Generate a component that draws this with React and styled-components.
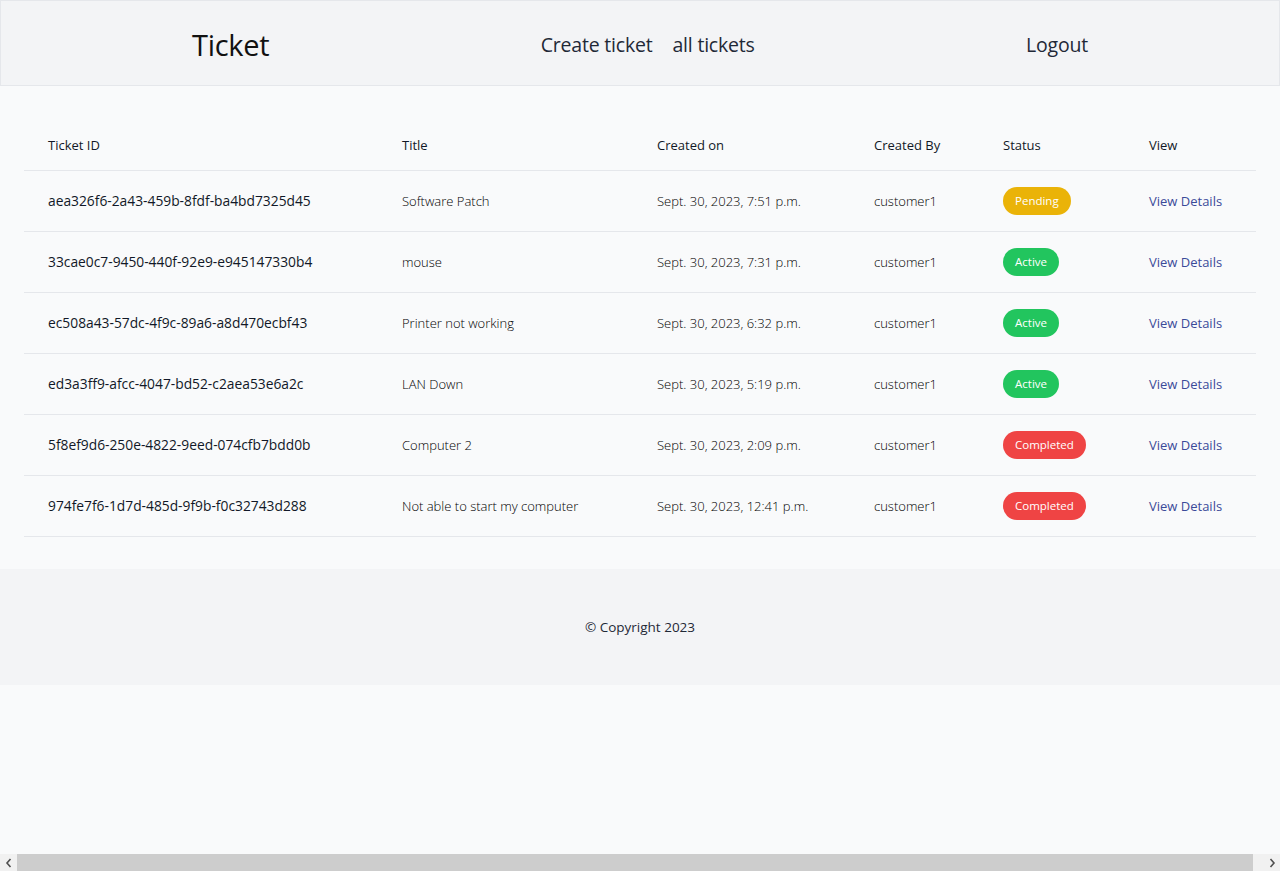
import styled, { createGlobalStyle } from "styled-components";

const Global = createGlobalStyle`
  html, body {
    margin: 0;
    padding: 0;
    background: #f9fafb;
    font-family: "Open Sans", "Noto Sans", sans-serif;
    color: #111827;
  }
`;

const Page = styled.div`
  min-height: 871px;
  background: #f9fafb;
`;

const Header = styled.header`
  background: #f3f4f6;
  border: 1px solid #e5e7eb;
  box-sizing: border-box;
  height: 86px;
  padding-top: 3px;
  display: flex;
  align-items: center;
`;

const HeaderInner = styled.div`
  width: 896px;
  margin: 0 auto;
  display: flex;
  justify-content: space-between;
  align-items: center;
`;

const Brand = styled.div`
  font-size: 29px;
  color: #111;
  letter-spacing: -0.3px;
`;

const Nav = styled.nav`
  display: flex;
  gap: 20px;
`;

const NavLink = styled.a`
  font-size: 19.5px;
  color: #1f2937;
  text-decoration: none;
  letter-spacing: -0.2px;
`;

const Main = styled.main`
  padding: 32px 24px;
`;

const Table = styled.table`
  width: 100%;
  border-collapse: collapse;
  table-layout: fixed;
  font-size: 13px;
`;

const Th = styled.th`
  box-sizing: border-box;
  text-align: left;
  font-weight: 400;
  color: #111827;
  padding: 17px 0 15px 24px;
  line-height: 20px;
  width: ${(p) => p.$w}px;
`;

const Row = styled.tr`
  border-top: 1px solid #e5e7eb;
  &:last-child {
    border-bottom: 1px solid #e5e7eb;
  }
`;

const Td = styled.td`
  padding: 16px 0 16px 24px;
  line-height: 28px;
  font-size: ${(p) => (p.$id ? "13.8px" : "13px")};
  font-weight: ${(p) => (p.$light ? 300 : 400)};
  color: ${(p) => (p.$light ? "#000" : "#111827")};
  white-space: nowrap;
`;

const COLORS = {
  Pending: "#eab308",
  Active: "#22c55e",
  Completed: "#ef4444",
};

const Badge = styled.span`
  display: inline-block;
  background: ${(p) => COLORS[p.$status]};
  color: #fff;
  font-size: 11.5px;
  line-height: 28px;
  height: 28px;
  padding: 0 12px;
  border-radius: 14px;
  vertical-align: top;
`;

const DetailLink = styled.a`
  color: #3b4a99;
  text-decoration: none;
  font-weight: 400;
`;

const Footer = styled.footer`
  background: #f3f4f6;
  height: 116px;
  display: flex;
  align-items: center;
  justify-content: center;
  font-size: 13.5px;
  color: #1f2937;
`;

const Scrollbar = styled.div`
  position: fixed;
  left: 0;
  right: 0;
  bottom: 0;
  height: 17px;
  background: #f1f1f1;
  display: flex;
  align-items: center;
`;

const Arrow = styled.div`
  width: 17px;
  height: 17px;
  display: flex;
  align-items: center;
  justify-content: center;
`;

const Thumb = styled.div`
  flex: 1;
  height: 17px;
  margin-right: 10px;
  background: #cdcdcd;
`;

const tickets = [
  ["aea326f6-2a43-459b-8fdf-ba4bd7325d45", "Software Patch", "Sept. 30, 2023, 7:51 p.m.", "Pending"],
  ["33cae0c7-9450-440f-92e9-e945147330b4", "mouse", "Sept. 30, 2023, 7:31 p.m.", "Active"],
  ["ec508a43-57dc-4f9c-89a6-a8d470ecbf43", "Printer not working", "Sept. 30, 2023, 6:32 p.m.", "Active"],
  ["ed3a3ff9-afcc-4047-bd52-c2aea53e6a2c", "LAN Down", "Sept. 30, 2023, 5:19 p.m.", "Active"],
  ["5f8ef9d6-250e-4822-9eed-074cfb7bdd0b", "Computer 2", "Sept. 30, 2023, 2:09 p.m.", "Completed"],
  ["974fe7f6-1d7d-485d-9f9b-f0c32743d288", "Not able to start my computer", "Sept. 30, 2023, 12:41 p.m.", "Completed"],
];

const cols = [
  ["Ticket ID", 354],
  ["Title", 255],
  ["Created on", 217],
  ["Created By", 129],
  ["Status", 146],
  ["View", 131],
];

export default function App() {
  return (
    <Page>
      <Global />
      <Header>
        <HeaderInner>
          <Brand>Ticket</Brand>
          <Nav>
            <NavLink href="#">Create ticket</NavLink>
            <NavLink href="#">all tickets</NavLink>
          </Nav>
          <NavLink href="#">Logout</NavLink>
        </HeaderInner>
      </Header>
      <Main>
        <Table>
          <thead>
            <tr>
              {cols.map(([name, w]) => (
                <Th key={name} $w={w}>
                  {name}
                </Th>
              ))}
            </tr>
          </thead>
          <tbody>
            {tickets.map(([id, title, date, status]) => (
              <Row key={id}>
                <Td $id>{id}</Td>
                <Td $light>{title}</Td>
                <Td $light>{date}</Td>
                <Td $light>customer1</Td>
                <Td>
                  <Badge $status={status}>{status}</Badge>
                </Td>
                <Td $light>
                  <DetailLink href="#">View Details</DetailLink>
                </Td>
              </Row>
            ))}
          </tbody>
        </Table>
      </Main>
      <Footer>© Copyright 2023</Footer>
      <Scrollbar>
        <Arrow>
          <svg width="8" height="10" viewBox="0 0 8 10">
            <path d="M5.5 1 L2 5 L5.5 9" stroke="#505050" strokeWidth="1.6" fill="none" />
          </svg>
        </Arrow>
        <Thumb />
        <Arrow>
          <svg width="8" height="10" viewBox="0 0 8 10">
            <path d="M2.5 1 L6 5 L2.5 9" stroke="#505050" strokeWidth="1.6" fill="none" />
          </svg>
        </Arrow>
      </Scrollbar>
    </Page>
  );
}
